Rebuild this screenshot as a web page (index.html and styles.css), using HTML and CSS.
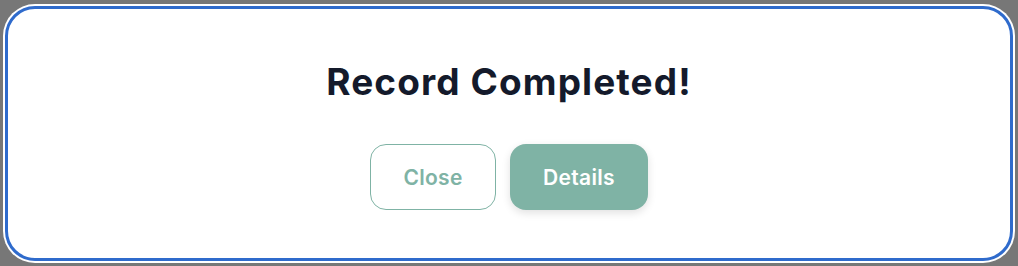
FILE: index.html
```html
<!DOCTYPE html>
<html lang="en">
<head>
    <meta charset="UTF-8">
    <meta name="viewport" content="width=device-width, initial-scale=1.0">
    <title>Record Completed</title>
    <link rel="stylesheet" href="styles.css">
</head>
<body>
    <div class="dialog">
        <h1 class="dialog-title">Record Completed!</h1>
        <div class="dialog-actions">
            <button class="btn btn-outline" type="button">Close</button>
            <button class="btn btn-solid" type="button">Details</button>
        </div>
    </div>
</body>
</html>
```

FILE: styles.css
```css
html, body {
    height: 100%;
}
body {
    font-family: Inter, "Noto Sans", sans-serif;
    margin: 0;
    padding: 6px 5px 5px 5px;
    box-sizing: border-box;
    background-color: #777777;
}
.dialog {
    height: 100%;
    box-sizing: border-box;
    background: white;
    border: 3px solid #2f6bcc;
    border-radius: 30px;
    box-shadow: 0 0 0 2px white;
    display: flex;
    flex-direction: column;
    align-items: center;
    padding-top: 50px;
}
.dialog-title {
    margin: 0;
    font-size: 37px;
    font-weight: 700;
    letter-spacing: 1.1px;
    color: #141a2b;
}
.dialog-actions {
    display: flex;
    gap: 14px;
    margin-top: 40px;
}
.btn {
    font-family: Inter, "Noto Sans", sans-serif;
    font-size: 21px;
    font-weight: 600;
    letter-spacing: 0.3px;
    height: 66px;
    border-radius: 16px;
    cursor: pointer;
}
.btn-outline {
    width: 126px;
    background: white;
    color: #7fb3a5;
    border: 1px solid #7fb3a5;
}
.btn-solid {
    width: 138px;
    background: #7fb3a5;
    color: white;
    border: none;
    box-shadow: 0 3px 8px rgba(0, 0, 0, 0.12);
}
```
